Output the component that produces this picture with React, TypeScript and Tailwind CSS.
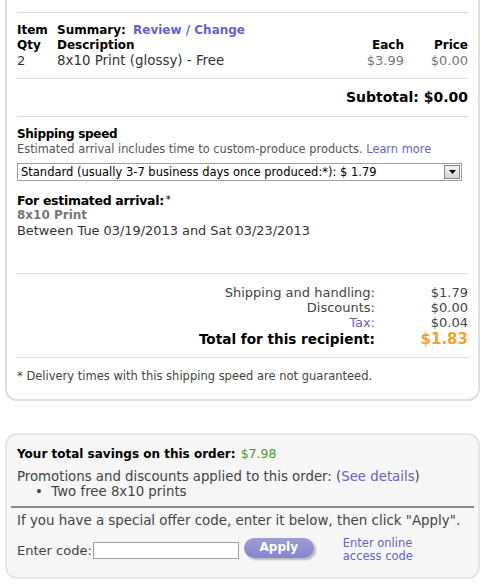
import React from 'react';

const font = "font-['DejaVu_Sans','Liberation_Sans',sans-serif]";

function Rule({ className = '' }: { className?: string }) {
  return <div className={`border-t border-[#dcdcdc] ${className}`} />;
}

export default function App() {
  return (
    <div className={`${font} bg-white w-[489px] h-[587px] overflow-hidden text-[13px] text-[#333]`}>
      {/* Order card */}
      <div className="ml-[5px] w-[475px] h-[401px] border-2 border-t-0 border-[#dedede] rounded-b-[12px] px-[10px] pt-[12px]">
        <Rule />
        <div className="pt-[10px] pb-[10px] leading-[15px]">
          <div className="flex text-[12px]">
            <div className="w-[40px] font-bold text-black">Item</div>
            <div className="font-bold text-black">
              Summary: <span className="text-[#6565bf] ml-[3px]">Review / Change</span>
            </div>
          </div>
          <div className="flex font-bold text-black text-[12px]">
            <div className="w-[40px]">Qty</div>
            <div className="flex-1">Description</div>
            <div className="w-[60px] text-right">Each</div>
            <div className="w-[64px] text-right">Price</div>
          </div>
          <div className="flex">
            <div className="w-[40px]">2</div>
            <div className="flex-1 text-[13.4px]">8x10 Print (glossy) - Free</div>
            <div className="w-[60px] text-right text-[#777]">$3.99</div>
            <div className="w-[64px] text-right text-[#777]">$0.00</div>
          </div>
        </div>
        <Rule />
        <div className="h-[37px] flex items-center justify-end text-[14px] font-bold text-black">Subtotal: $0.00</div>
        <Rule />

        <div className="pt-[10px] leading-[15px]">
          <div className="text-[12px] tracking-[-0.3px] font-bold text-black">Shipping speed</div>
          <div className="text-[11.4px] leading-[14px] text-[#555]">
            Estimated arrival includes time to custom-produce products. <span className="text-[#6565bf]">Learn more</span>
          </div>
          <div className="mt-[7px] w-[445px] h-[18px] border border-[#a0a0a0] flex items-center text-[11.5px] text-black pl-[3px]">
            <span className="flex-1">Standard (usually 3-7 business days once produced:*): $ 1.79</span>
            <span className="w-[16px] h-[14px] mr-[1px] border border-[#888] bg-gradient-to-b from-[#f4f4f4] to-[#d4d4d4] flex items-center justify-center">
              <svg width="7" height="4" viewBox="0 0 7 4"><path d="M0 0h7L3.5 4z" fill="#000" /></svg>
            </span>
          </div>
          <div className="mt-[12px] text-[12.5px] tracking-[-0.3px] font-bold text-black">
            For estimated arrival:<sup className="font-normal text-[10px] relative top-[-2px] ml-[2px]">*</sup>
          </div>
          <div className="text-[12px] font-bold text-[#777]">8x10 Print</div>
          <div className="text-[12.9px]">Between Tue 03/19/2013 and Sat 03/23/2013</div>
        </div>

        <Rule className="mt-[35px]" />
        <div className="pt-[11px] pb-[9px] leading-[15px] text-[#444]">
          <div className="flex">
            <div className="flex-1 text-right">Shipping and handling:</div>
            <div className="w-[93px] text-right">$1.79</div>
          </div>
          <div className="flex">
            <div className="flex-1 text-right">Discounts:</div>
            <div className="w-[93px] text-right">$0.00</div>
          </div>
          <div className="flex">
            <div className="flex-1 text-right text-[#6565bf]">Tax:</div>
            <div className="w-[93px] text-right">$0.04</div>
          </div>
          <div className="flex items-end text-[13.6px] leading-[18px] font-bold">
            <div className="flex-1 text-right text-black">Total for this recipient:</div>
            <div className="w-[93px] text-right text-[15px] text-[#f5a033]">$1.83</div>
          </div>
        </div>
        <Rule />
        <div className="pt-[11px] text-[11.5px] leading-[14px] text-[#444]">
          * Delivery times with this shipping speed are not guaranteed.
        </div>
      </div>

      {/* Savings / promo card */}
      <div className="mt-[32px] ml-[5px] w-[475px] h-[146px] border-2 border-[#e6e6e6] rounded-[12px] bg-[#f6f6f6] leading-[15px]">
        <div className="px-[10px] pt-[11px]">
          <div className="text-[12px] font-bold text-black">
            Your total savings on this order: <span className="font-normal text-[12.5px] text-[#4c9b2f] ml-[1px]">$7.98</span>
          </div>
          <div className="mt-[7px] text-[13.3px] text-[#444]">
            Promotions and discounts applied to this order: (<span className="text-[#6565bf]">See details</span>)
          </div>
          <div className="pl-[18px] text-[13.3px] text-[#444]">•&nbsp;&nbsp;Two free 8x10 prints</div>
        </div>
        <div className="mx-[4px] mt-[7px] border-t-2 border-[#8a8a8a]" />
        <div className="px-[10px] pt-[5px] text-[#444]">
          <div className="text-[13.4px]">If you have a special offer code, enter it below, then click "Apply".</div>
          <div className="mt-[9px] flex items-center">
            <span>Enter code:</span>
            <span className="ml-[1px] w-[146px] h-[17px] border border-[#a0a0a0] bg-white" />
            <span className="ml-[5px] w-[70px] h-[20px] rounded-full bg-gradient-to-b from-[#9d9ddb] to-[#8585c8] shadow-[2px_2px_2px_rgba(0,0,0,0.25)] text-white font-bold text-[12px] flex items-center justify-center -mt-[5px]">
              Apply
            </span>
            <span className="ml-[29px] text-[11.5px] leading-[13px] text-[#6565bf]">
              Enter online<br />access code
            </span>
          </div>
        </div>
      </div>
    </div>
  );
}
